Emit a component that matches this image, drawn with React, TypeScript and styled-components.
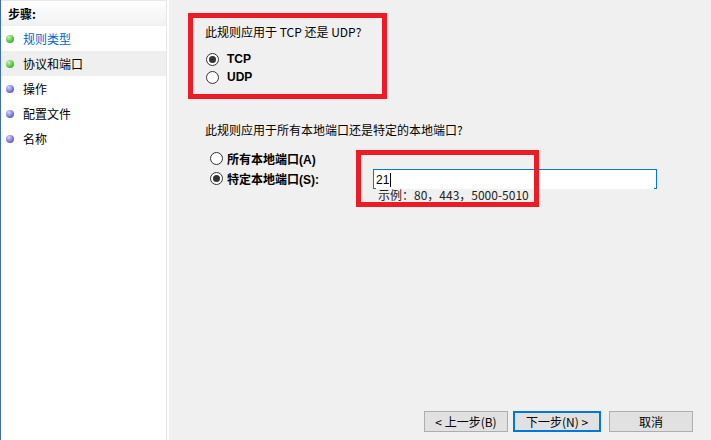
import styled, { createGlobalStyle } from "styled-components";

const GlobalStyle = createGlobalStyle`
  html, body {
    margin: 0;
    padding: 0;
    background: #f0f0f0;
  }
  body {
    font-family: "Noto Sans CJK SC", "Liberation Sans", sans-serif;
    font-size: 12px;
    color: #000;
  }
`;

const Window = styled.div`
  width: 711px;
  height: 440px;
  display: flex;
  overflow: hidden;
`;

const SidePane = styled.div`
  width: 166px;
  flex-shrink: 0;
  display: flex;
  background: #fff;
  border-left: 1px solid #3e6db3;
  padding-right: 2px;
`;

const Steps = styled.div`
  flex: 1;
  display: flex;
  flex-direction: column;
  border-right: 1px solid #e6e6e6;
`;

const StepsHeader = styled.div`
  height: 25px;
  border-top: 1px solid #e8e8e8;
  background: linear-gradient(#ffffff, #f1f1f1);
  display: flex;
  align-items: center;
  padding-left: 7px;
  font-weight: bold;
  font-size: 12px;
`;

const StepRow = styled.div<{ $active?: boolean }>`
  height: 25px;
  display: flex;
  align-items: center;
  gap: 9px;
  padding-left: 5px;
  background: ${(p) => (p.$active ? "#efefef" : "transparent")};
`;

const Bullet = styled.span<{ $done?: boolean }>`
  width: 8px;
  height: 8px;
  border-radius: 50%;
  background: ${(p) =>
    p.$done
      ? "radial-gradient(circle at 35% 30%, #c8f5b4, #4fbf3c 60%, #2f8f2a)"
      : "radial-gradient(circle at 35% 30%, #d4d4ff, #7272d8 60%, #4848a8)"};
`;

const StepLabel = styled.span<{ $current?: boolean }>`
  color: ${(p) => (p.$current ? "#0066cc" : "#000")};
  font-size: 12px;
`;

const Content = styled.div`
  position: relative;
  flex: 1;
  display: flex;
  flex-direction: column;
  padding: 24px 0 8px 36px;
  background: #f0f0f0;
`;

const Question = styled.div<{ $gap?: number }>`
  line-height: 16px;
  margin-top: ${(p) => p.$gap ?? 0}px;
  white-space: nowrap;
`;

const RadioGroup = styled.div<{ $indent: number; $gap: number }>`
  display: flex;
  flex-direction: column;
  padding-left: ${(p) => p.$indent}px;
  margin-top: ${(p) => p.$gap}px;
`;

const RadioRow = styled.div<{ $h: number; $gap: number; $row?: number }>`
  height: ${(p) => p.$h}px;
  display: flex;
  align-items: center;
  gap: ${(p) => p.$gap}px;
  grid-column: 1;
  grid-row: ${(p) => p.$row ?? "auto"};
`;

const RadioCircle = styled.span<{ $checked?: boolean }>`
  width: 11px;
  height: 11px;
  border: 1px solid #333;
  border-radius: 50%;
  background: #fff;
  display: flex;
  align-items: center;
  justify-content: center;
  &::after {
    content: "";
    width: 7px;
    height: 7px;
    border-radius: 50%;
    background: ${(p) => (p.$checked ? "#333" : "transparent")};
  }
`;

const BoldLabel = styled.span`
  font-weight: bold;
  font-size: 12px;
  font-family: "Liberation Sans", "Noto Sans CJK SC", sans-serif;
`;

const PortGrid = styled.div`
  display: grid;
  grid-template-columns: 163px 284px;
  grid-template-rows: 20px 20px auto;
  padding-left: 5px;
  margin-top: 10px;
`;

const PortInput = styled.div`
  grid-column: 2;
  grid-row: 2;
  position: relative;
  margin-top: 1px;
  height: 19px;
  border: 1px solid #0078d7;
  border-bottom: none;
  background: #fff;
  display: flex;
  align-items: center;
  padding-left: 2px;
  font-family: "Liberation Sans", sans-serif;
  font-size: 12px;
  &::before,
  &::after {
    content: "";
    position: absolute;
    bottom: 0;
    width: 2px;
    height: 1px;
    background: #0078d7;
  }
  &::before {
    left: 0;
  }
  &::after {
    right: 0;
  }
`;

const Caret = styled.span`
  width: 1px;
  height: 14px;
  background: #000;
  margin-left: 1px;
`;

const Hint = styled.div`
  grid-column: 2;
  grid-row: 3;
  margin: 0 4px 0 3px;
  padding-left: 2px;
  line-height: 14px;
  color: #222;
  white-space: nowrap;
`;

const ButtonBar = styled.div`
  margin-top: auto;
  display: flex;
  justify-content: flex-end;
  align-items: center;
  padding-right: 18px;
`;

const Button = styled.button<{ $default?: boolean; $w: number; $gap?: number }>`
  width: ${(p) => p.$w}px;
  height: 21px;
  margin-left: ${(p) => p.$gap ?? 0}px;
  background: #e1e1e1;
  border: ${(p) => (p.$default ? "2px solid #0078d7" : "1px solid #adadad")};
  font-family: "Noto Sans CJK SC", sans-serif;
  font-size: 12px;
  color: #000;
  padding: 0;
  line-height: 1;
`;

const Callout = styled.div<{ $x: number; $y: number; $w: number; $h: number }>`
  position: absolute;
  left: ${(p) => p.$x}px;
  top: ${(p) => p.$y}px;
  width: ${(p) => p.$w}px;
  height: ${(p) => p.$h}px;
  box-sizing: border-box;
  border: 5px solid #ed1c24;
  pointer-events: none;
`;

const steps = [
  { label: "规则类型", done: true, current: true },
  { label: "协议和端口", done: true, active: true },
  { label: "操作" },
  { label: "配置文件" },
  { label: "名称" },
];

export default function App() {
  return (
    <>
      <GlobalStyle />
      <Window>
        <SidePane>
          <Steps>
            <StepsHeader>步骤:</StepsHeader>
            {steps.map((s) => (
              <StepRow key={s.label} $active={s.active}>
                <Bullet $done={s.done} />
                <StepLabel $current={s.current}>{s.label}</StepLabel>
              </StepRow>
            ))}
          </Steps>
        </SidePane>
        <Content>
          <Question>此规则应用于 TCP 还是 UDP?</Question>
          <RadioGroup $indent={1} $gap={10}>
            <RadioRow $h={18} $gap={8}>
              <RadioCircle $checked />
              <BoldLabel>TCP</BoldLabel>
            </RadioRow>
            <RadioRow $h={18} $gap={8}>
              <RadioCircle />
              <BoldLabel>UDP</BoldLabel>
            </RadioRow>
          </RadioGroup>

          <Question $gap={36}>此规则应用于所有本地端口还是特定的本地端口?</Question>
          <PortGrid>
            <RadioRow $h={20} $gap={4} $row={1}>
              <RadioCircle />
              <BoldLabel>所有本地端口(A)</BoldLabel>
            </RadioRow>
            <RadioRow $h={20} $gap={4} $row={2}>
              <RadioCircle $checked />
              <BoldLabel>特定本地端口(S):</BoldLabel>
            </RadioRow>
            <PortInput>
              21
              <Caret />
            </PortInput>
            <Hint>示例：80，443，5000-5010</Hint>
          </PortGrid>

          <ButtonBar>
            <Button $w={84}>&lt; 上一步(B)</Button>
            <Button $w={88} $gap={5} $default>
              下一步(N) &gt;
            </Button>
            <Button $w={84} $gap={8}>
              取消
            </Button>
          </ButtonBar>

          <Callout $x={19} $y={13} $w={199} $h={86} />
          <Callout $x={187} $y={150} $w={183} $h={57} />
        </Content>
      </Window>
    </>
  );
}
